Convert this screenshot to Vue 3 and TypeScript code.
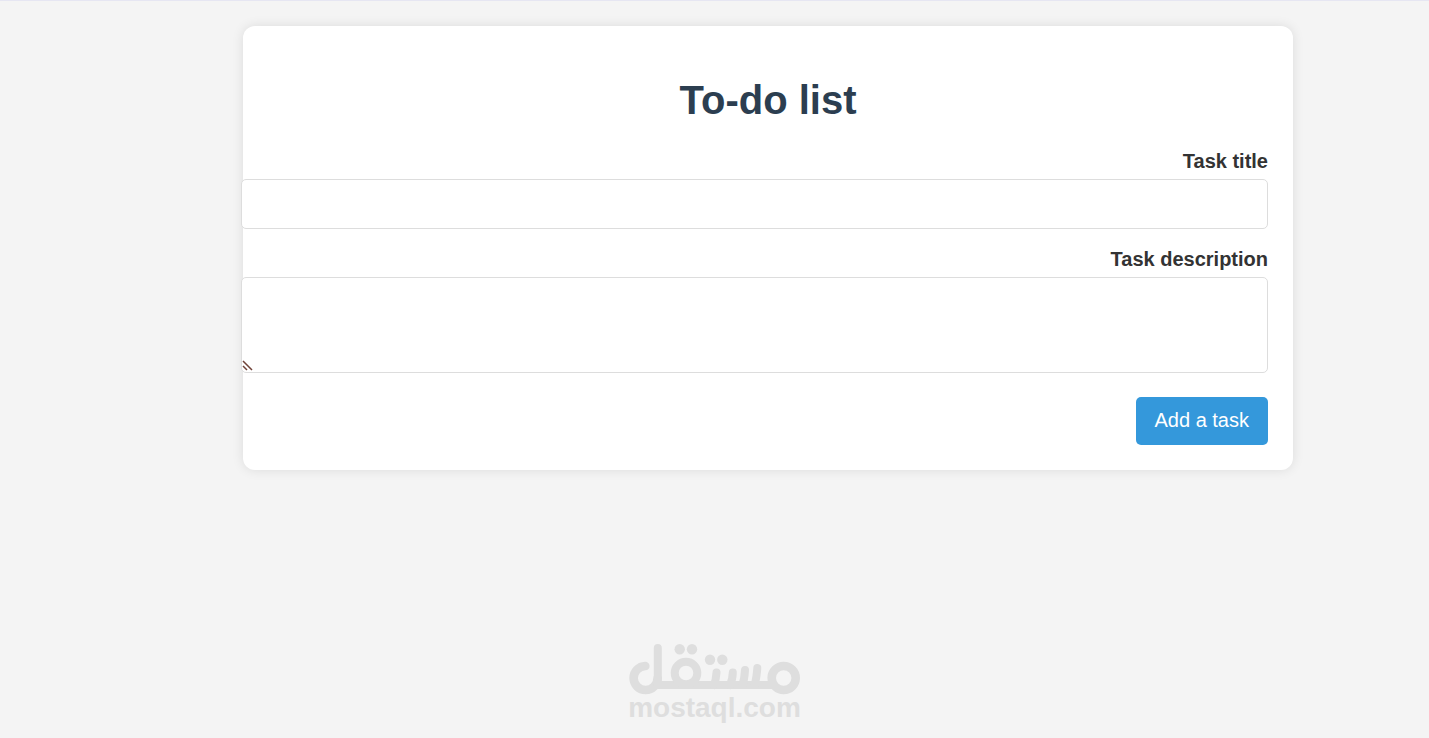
<script setup lang="ts">
import { ref } from 'vue'

const title = ref('')
const description = ref('')

function addTask(): void {
  title.value = ''
  description.value = ''
}
</script>

<template>
  <div class="page">
    <main class="card">
      <h1>To-do list</h1>
      <form @submit.prevent="addTask">
        <div class="field">
          <label for="task-title">Task title</label>
          <input id="task-title" v-model="title" type="text" />
        </div>
        <div class="field">
          <label for="task-description">Task description</label>
          <textarea id="task-description" v-model="description"></textarea>
        </div>
        <button type="submit">Add a task</button>
      </form>
    </main>
    <footer class="brand">
      <svg class="logo" viewBox="0 0 172 50" aria-hidden="true">
        <g fill="none" stroke="currentColor" stroke-width="8" stroke-linecap="round">
          <path stroke-width="8.6" d="M16.3 22A12 12 0 1 0 28.6 34" />
          <path d="M28.800 36V4" />
          <path d="M28 41H144" />
          <circle cx="57" cy="29" r="11.3" />
          <circle cx="154.700" cy="34" r="12" stroke-width="8.6" />
          <path d="M87.500 28.500Q87 36 85 41M103.800 28.500Q103.500 36 101 41M116 26Q115.500 35 113.500 41M128.300 24Q127.500 35 125.500 41" />
        </g>
        <g fill="currentColor">
          <circle cx="50.700" cy="5.300" r="5.200" />
          <circle cx="63" cy="5.300" r="5.200" />
          <circle cx="81" cy="15.700" r="5.200" />
          <circle cx="93.300" cy="15.700" r="5.200" />
        </g>
      </svg>
      <span class="name">mostaql.com</span>
    </footer>
  </div>
</template>

<style>
body {
  margin: 0;
  background: #f4f4f4;
}
</style>

<style scoped>
.page {
  box-sizing: border-box;
  display: flex;
  flex-direction: column;
  justify-content: space-between;
  min-height: 100vh;
  padding: 25px 0 16px;
  border-top: 1px solid #e6e6f2;
  background: #f4f4f4;
  color: #333;
  font-family: Arial, "Liberation Sans", sans-serif;
  font-size: 20px;
}

.card {
  direction: rtl;
  box-sizing: border-box;
  width: calc(100% - 48px);
  max-width: 1050px;
  margin-left: auto;
  margin-right: 136px;
  padding: 25px;
  border-radius: 12px;
  background: #fff;
  box-shadow: 0 0 12px rgba(0, 0, 0, 0.1);
}

h1 {
  margin: 26px 0 27px;
  color: #2c3e50;
  font-size: 40px;
  line-height: 46px;
  text-align: center;
}

.field {
  margin-bottom: 19px;
}

label {
  display: block;
  margin-bottom: 6px;
  font-weight: bold;
  line-height: 23px;
}

input,
textarea {
  display: block;
  box-sizing: content-box;
  width: 100%;
  padding: 12px 12px 12px 13px;
  border: 1px solid #ddd;
  border-radius: 5px;
  background: #fff;
  color: #333;
  font: inherit;
}

input {
  height: 24px;
}

textarea {
  height: 70px;
  margin-bottom: 24px;
  resize: both;
}

textarea::-webkit-resizer {
  background: url("data:image/svg+xml,%3Csvg xmlns='http://www.w3.org/2000/svg' width='15' height='15'%3E%3Cpath d='M1 4L10 13M1 9L5 13' fill='none' stroke='%23704238' stroke-width='1.5'/%3E%3C/svg%3E") no-repeat left bottom;
}

button {
  display: block;
  padding: 12px 19px 13px 18px;
  border: 0;
  border-radius: 5px;
  background: #3498db;
  color: #fff;
  font: inherit;
  line-height: 23px;
  cursor: pointer;
}

.brand {
  display: flex;
  flex-direction: column;
  align-items: center;
  color: #dedede;
}

.logo {
  display: block;
  width: 172px;
  height: 50px;
  overflow: visible;
}

.name {
  font-size: 28px;
  font-weight: bold;
  line-height: 28px;
}
</style>
